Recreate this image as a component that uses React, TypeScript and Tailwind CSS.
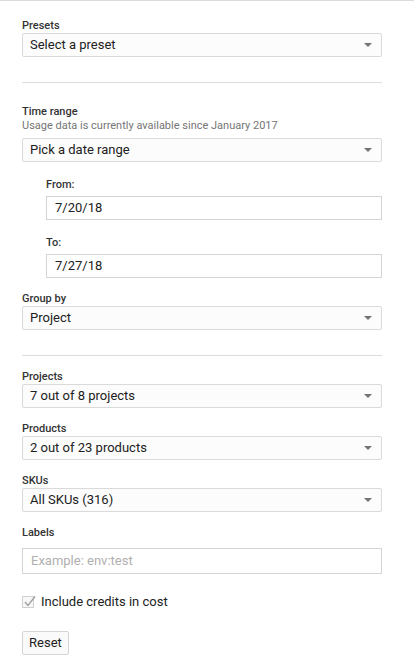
import React from "react";

const font = { fontFamily: "Roboto, 'Noto Sans', Arial, sans-serif" };

function Caret() {
  return (
    <svg width="8" height="4" viewBox="0 0 8 4" className="shrink-0">
      <path d="M0 0h8L4 4z" fill="#757575" />
    </svg>
  );
}

function Label({ children, className = "" }: { children: React.ReactNode; className?: string }) {
  return (
    <div className={`h-[14px] text-[11px] leading-[14px] font-medium text-[#333] ${className}`}>
      {children}
    </div>
  );
}

function Select({ value }: { value: string }) {
  return (
    <div className="flex h-[24px] w-full items-center justify-between rounded-[2px] border border-[#dadada] bg-[#fcfcfc] pl-[7px] pr-[9px] text-[13px] text-[#212121]">
      <span>{value}</span>
      <Caret />
    </div>
  );
}

function TextBox({ value, placeholder, tall }: { value?: string; placeholder?: string; tall?: boolean }) {
  return (
    <div
      className={`flex w-full items-center border border-[#d4d4d4] bg-white pl-[8px] text-[13px] ${
        tall ? "h-[26px]" : "h-[24px]"
      } ${value ? "text-[#212121]" : "text-[#b0b0b0]"}`}
    >
      {value ?? placeholder}
    </div>
  );
}

function Divider({ className = "" }: { className?: string }) {
  return <div className={`h-px w-full bg-[#dcdcdc] ${className}`} />;
}

export default function App() {
  return (
    <div style={font} className="min-h-[668px] w-[414px] border-t border-[#dcdcdc] bg-white">
      <div className="w-[360px] ml-[22px]">
        <Label className="mt-[18px]">Presets</Label>
        <Select value="Select a preset" />

        <Divider className="mt-[25px]" />

        <Label className="mt-[22px]">Time range</Label>
        <div className="h-[14px] text-[11px] leading-[14px] text-[#757575]">
          Usage data is currently available since January 2017
        </div>
        <div className="mt-[5px]">
          <Select value="Pick a date range" />
        </div>

        <div className="ml-[24px]">
          <Label className="mt-[16px]">From:</Label>
          <div className="mt-[4px]">
            <TextBox value="7/20/18" />
          </div>
          <Label className="mt-[16px]">To:</Label>
          <div className="mt-[4px]">
            <TextBox value="7/27/18" />
          </div>
        </div>

        <Label className="mt-[14px]">Group by</Label>
        <Select value="Project" />

        <Divider className="mt-[25px]" />

        <Label className="mt-[14px]">Projects</Label>
        <Select value="7 out of 8 projects" />

        <Label className="mt-[14px]">Products</Label>
        <Select value="2 out of 23 products" />

        <Label className="mt-[14px]">SKUs</Label>
        <Select value="All SKUs (316)" />

        <Label className="mt-[14px]">Labels</Label>
        <div className="mt-[8px]">
          <TextBox placeholder="Example: env:test" tall />
        </div>

        <label className="mt-[22px] flex items-center gap-[7px] text-[13px] leading-[12px] text-[#212121]">
          <span className="relative h-[12px] w-[12px] border border-[#d0d0d0] bg-[#f7f7f7]">
            <svg width="14" height="14" viewBox="0 0 14 14" className="absolute -top-[3px] left-0">
              <path d="M2 8l3 3.5 7-9" fill="none" stroke="#9e9e9e" strokeWidth="1.3" />
            </svg>
          </span>
          Include credits in cost
        </label>

        <button
          type="button"
          className="mt-[23px] flex h-[24px] w-[47px] items-center justify-center rounded-[2px] border border-[#d4d4d4] bg-[#fafafa] text-[13px] text-[#212121]"
        >
          Reset
        </button>
      </div>
    </div>
  );
}
